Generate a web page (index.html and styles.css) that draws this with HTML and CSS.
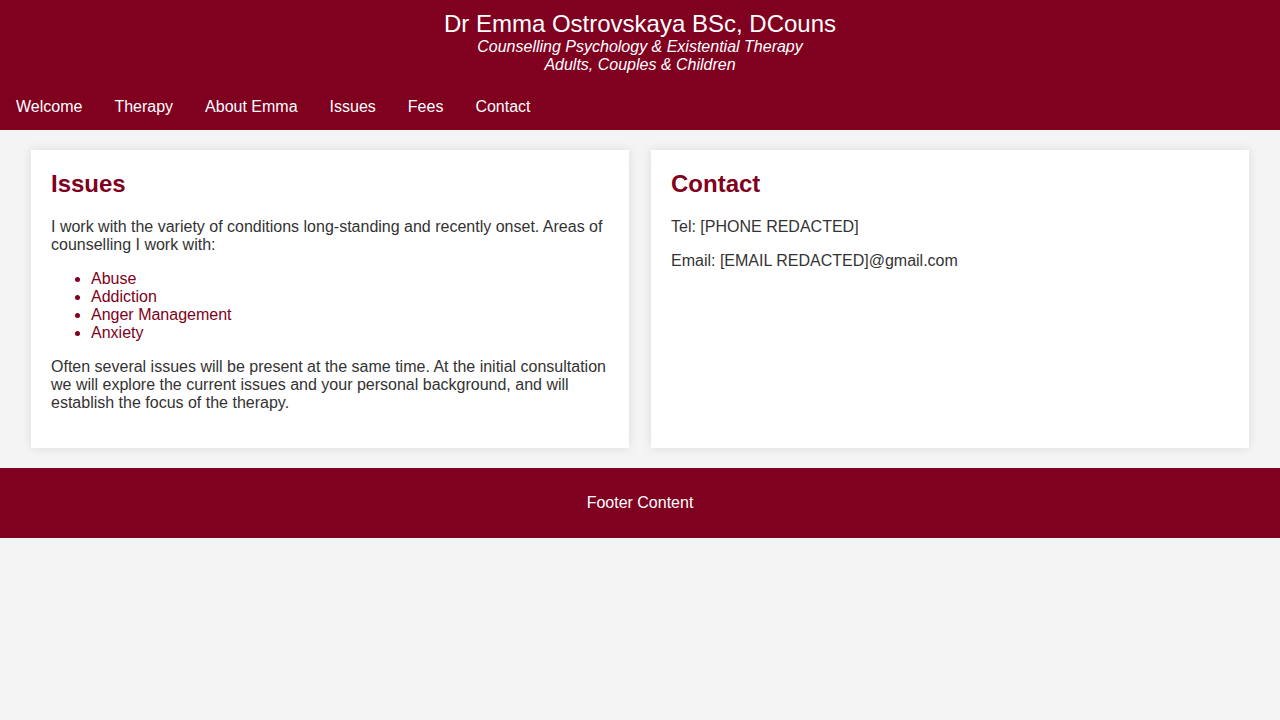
FILE: index.html
```html
<!DOCTYPE html>
<html lang="en">
<head>
<meta charset="utf-8">
<title>Dr Emma Ostrovskaya</title>
<link rel="stylesheet" href="styles.css">
</head>
<body>
<header class="site-header">
  <div class="brand">
    <div class="brand-title">Dr Emma Ostrovskaya BSc, DCouns</div>
    <div class="brand-sub">Counselling Psychology &amp; Existential Therapy</div>
    <div class="brand-sub">Adults, Couples &amp; Children</div>
  </div>
  <nav class="nav">
    <a class="nav-link" href="#">Welcome</a>
    <a class="nav-link" href="#">Therapy</a>
    <a class="nav-link" href="#">About Emma</a>
    <a class="nav-link" href="#">Issues</a>
    <a class="nav-link" href="#">Fees</a>
    <a class="nav-link" href="#">Contact</a>
  </nav>
</header>
<main class="main">
  <section class="card">
    <h2 class="card-title">Issues</h2>
    <p class="text">I work with the variety of conditions long-standing and recently onset. Areas of counselling I work with:</p>
    <ul class="issue-list">
      <li>Abuse</li>
      <li>Addiction</li>
      <li>Anger Management</li>
      <li>Anxiety</li>
    </ul>
    <p class="text">Often several issues will be present at the same time. At the initial consultation we will explore the current issues and your personal background, and will establish the focus of the therapy.</p>
  </section>
  <section class="card">
    <h2 class="card-title">Contact</h2>
    <p class="text">Tel: [PHONE REDACTED]</p>
    <p class="text">Email: [EMAIL REDACTED]@gmail.com</p>
  </section>
</main>
<footer class="footer">Footer Content</footer>
</body>
</html>
```
FILE: styles.css
```css
* { box-sizing: border-box; }
body {
  margin: 0;
  background: #f4f4f4;
  font-family: "Liberation Sans", Arial, sans-serif;
  font-size: 16px;
  color: #333;
}
.site-header {
  background: #800020;
  color: #fff;
}
.brand {
  text-align: center;
  padding: 10px 0 8px;
}
.brand-title {
  font-size: 24px;
}
.brand-sub {
  font-style: italic;
  font-size: 16px;
}
.nav {
  display: flex;
}
.nav-link {
  color: #fff;
  text-decoration: none;
  padding: 16px 16px 14px;
  line-height: 18px;
}
.main {
  display: flex;
  gap: 22px;
  padding: 20px 31px;
  align-items: stretch;
}
.card {
  flex: 1;
  background: #fff;
  padding: 20px;
  box-shadow: 0 0 10px rgba(0,0,0,0.1);
}
.card-title {
  margin: 0 0 20px;
  color: #800020;
  font-size: 24px;
  font-weight: bold;
}
.text {
  margin: 16px 0;
  line-height: 18px;
}
.card-title + .text { margin-top: 0; }
.issue-list {
  margin: 16px 0;
  padding-left: 40px;
  color: #800020;
  line-height: 18px;
}
.footer {
  background: #800020;
  color: #fff;
  text-align: center;
  padding: 26px 0;
  line-height: 18px;
}
```
